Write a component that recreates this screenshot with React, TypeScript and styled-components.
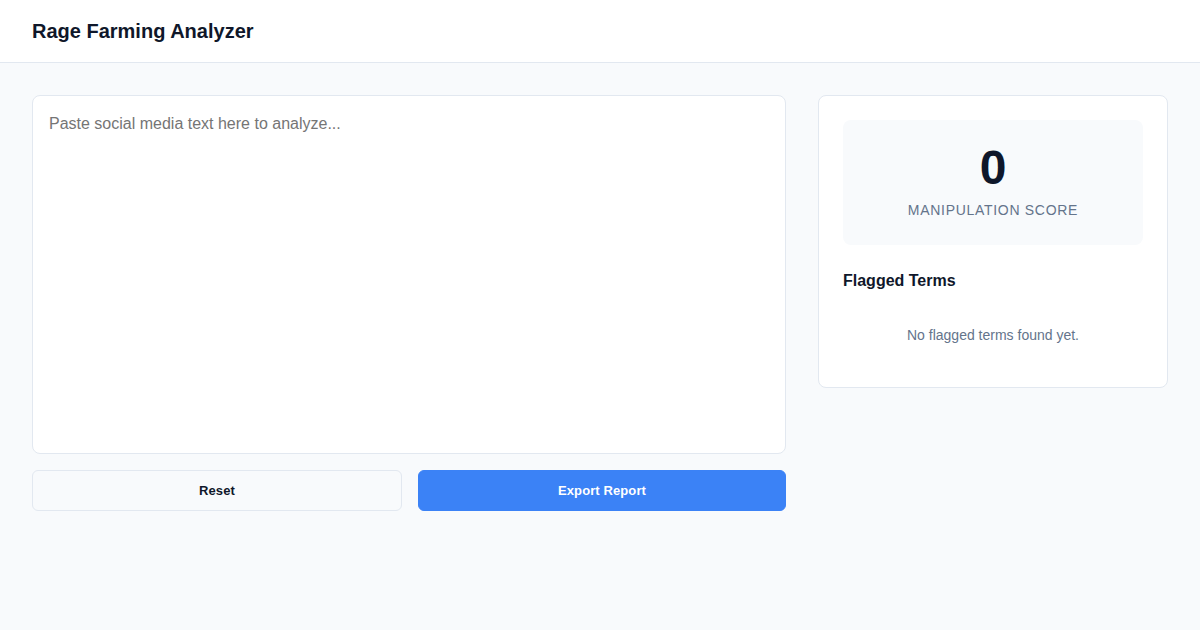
import React, { useState } from "react";
import styled, { createGlobalStyle } from "styled-components";

const GlobalStyle = createGlobalStyle`
  html, body {
    margin: 0;
    padding: 0;
    background: #f8fafc;
    font-family: "Liberation Sans", Arial, sans-serif;
    color: #0f172a;
  }
  * { box-sizing: border-box; }
`;

const App: React.FC = () => {
  const [text, setText] = useState("");

  return (
    <>
      <GlobalStyle />
      <Header>
        <Title>Rage Farming Analyzer</Title>
      </Header>
      <Main>
        <LeftColumn>
          <TextInput
            value={text}
            onChange={(e) => setText(e.target.value)}
            placeholder="Paste social media text here to analyze..."
          />
          <Buttons>
            <Button onClick={() => setText("")}>Reset</Button>
            <Button primary>Export Report</Button>
          </Buttons>
        </LeftColumn>
        <Card>
          <ScoreBox>
            <Score>0</Score>
            <ScoreLabel>Manipulation Score</ScoreLabel>
          </ScoreBox>
          <SectionTitle>Flagged Terms</SectionTitle>
          <Empty>No flagged terms found yet.</Empty>
        </Card>
      </Main>
    </>
  );
};

const Header = styled.header`
  height: 63px;
  background: #ffffff;
  border-bottom: 1px solid #e2e8f0;
  display: flex;
  align-items: center;
  padding: 0 32px;
`;

const Title = styled.h1`
  margin: 0;
  font-size: 20px;
  font-weight: 700;
  color: #0f172a;
`;

const Main = styled.main`
  display: grid;
  grid-template-columns: 1fr 350px;
  gap: 32px;
  padding: 32px;
  align-items: start;
`;

const LeftColumn = styled.div`
  display: flex;
  flex-direction: column;
  gap: 16px;
`;

const TextInput = styled.textarea`
  height: 359px;
  width: 100%;
  resize: none;
  border: 1px solid #e2e8f0;
  border-radius: 8px;
  background: #ffffff;
  padding: 16px;
  font-family: "Liberation Sans", Arial, sans-serif;
  font-size: 16px;
  line-height: 24px;
  color: #0f172a;
  outline: none;

  &::placeholder {
    color: #757575;
  }
`;

const Buttons = styled.div`
  display: grid;
  grid-template-columns: 370px 1fr;
  gap: 16px;
`;

const Button = styled.button<{ primary?: boolean }>`
  height: 41px;
  border-radius: 6px;
  border: 1px solid ${({ primary }) => (primary ? "#3b82f6" : "#e2e8f0")};
  background: ${({ primary }) => (primary ? "#3b82f6" : "#f8fafc")};
  color: ${({ primary }) => (primary ? "#ffffff" : "#0f172a")};
  font-family: "Liberation Sans", Arial, sans-serif;
  font-size: 13px;
  font-weight: 700;
  letter-spacing: 0.1px;
  cursor: pointer;
`;

const Card = styled.section`
  background: #ffffff;
  border: 1px solid #e2e8f0;
  border-radius: 8px;
  padding: 24px;
`;

const ScoreBox = styled.div`
  background: #f8fafc;
  border-radius: 8px;
  padding: 24px 24px 25px;
  display: flex;
  flex-direction: column;
  align-items: center;
`;

const Score = styled.div`
  font-size: 48px;
  line-height: 48px;
  font-weight: 700;
  color: #0f172a;
`;

const ScoreLabel = styled.div`
  margin-top: 8px;
  font-size: 14px;
  line-height: 20px;
  letter-spacing: 0.7px;
  text-transform: uppercase;
  color: #64748b;
`;

const SectionTitle = styled.h3`
  margin: 24px 0 16px;
  font-size: 16px;
  line-height: 24px;
  font-weight: 700;
  color: #0f172a;
`;

const Empty = styled.p`
  margin: 0;
  padding: 16px 0 18px;
  text-align: center;
  font-size: 14px;
  line-height: 20px;
  color: #64748b;
`;

export default App;
